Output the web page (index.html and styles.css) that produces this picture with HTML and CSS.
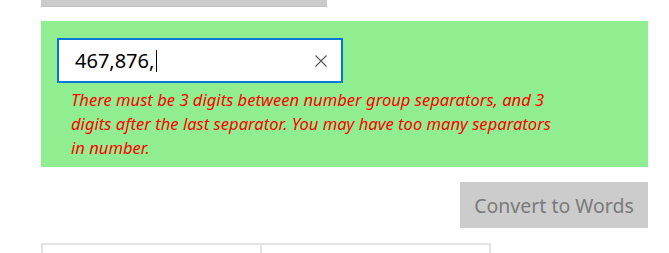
FILE: index.html
```html
<!DOCTYPE html>
<html>
<head>
    <link rel="stylesheet" href="styles.css">
</head>
<body>
    <div class="page">
        <!-- previous control, scrolled mostly out of view -->
        <div class="top-bar"></div>

        <!-- Number entry panel -->
        <div class="entry-panel">
            <div class="textbox">
                <span class="value">467,876,</span><span class="caret"></span>
                <svg class="clear" width="12" height="12" viewBox="0 0 12 12">
                    <path d="M0.5 0.5 L11.5 11.5 M11.5 0.5 L0.5 11.5" stroke="#555" stroke-width="1.1" fill="none"/>
                </svg>
            </div>
            <div class="error">
                There must be 3 digits between number group separators, and 3
                digits after the last separator. You may have too many separators
                in number.
            </div>
        </div>

        <div class="actions">
            <button class="convert" disabled>Convert to Words</button>
        </div>

        <div class="results">
            <div class="result-box first"></div>
            <div class="result-box second"></div>
        </div>
    </div>
</body>
</html>
```

FILE: styles.css
```css
body {
    margin: 0;
    background: white;
    font-family: "Noto Sans", "Open Sans", sans-serif;
    overflow: hidden;
}
.page {
    width: 607px;
    margin-left: 41px;
}
.top-bar {
    width: 286px;
    height: 6px;
    background: #cccccc;
    border-bottom: 1px solid #c2c2c2;
}
.entry-panel {
    margin-top: 14px;
    background: #90ee90;
    padding: 17px 16px 7px 16px;
    height: 122px;
}
.textbox {
    height: 41px;
    width: 266px;
    border: 2px solid #0078d7;
    background: white;
    display: flex;
    align-items: center;
    padding-left: 16px;
    font-size: 20px;
    color: black;
}
.caret {
    width: 1px;
    height: 22px;
    background: black;
    margin-left: 2px;
}
.clear {
    margin-left: auto;
    margin-right: 14px;
}
.error {
    margin: 5px 0 0 14px;
    width: 484px;
    color: red;
    font-style: italic;
    font-size: 16.6px;
    line-height: 24px;
}
.actions {
    display: flex;
    justify-content: flex-end;
    margin-top: 15px;
}
.convert {
    width: 188px;
    height: 46px;
    border: none;
    background: #cccccc;
    color: #7a7a7a;
    font-family: "Noto Sans", "Open Sans", sans-serif;
    font-size: 19.5px;
    padding: 0;
}
.results {
    display: flex;
    margin-top: 15px;
}
.result-box {
    height: 40px;
    border: 2px solid #e3e3e3;
}
.first {
    width: 217px;
}
.second {
    width: 227px;
    margin-left: -2px;
}
```
